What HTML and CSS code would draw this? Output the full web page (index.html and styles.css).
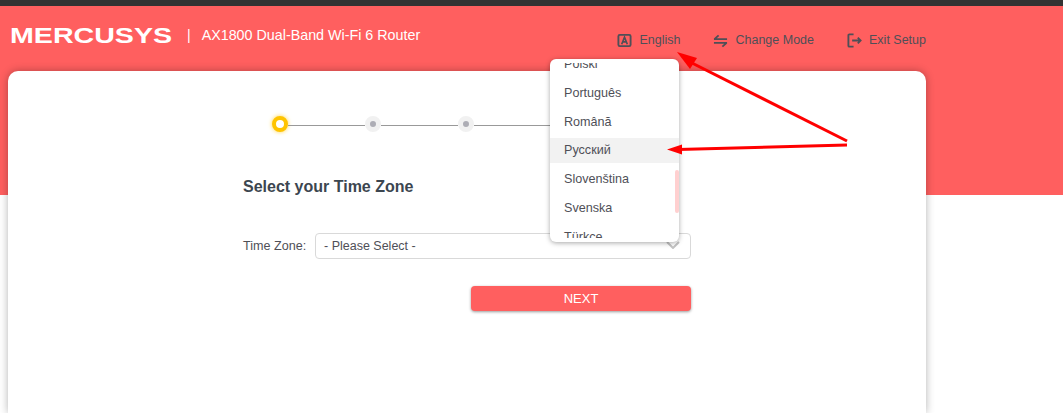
FILE: index.html
```html
<!DOCTYPE html>
<html lang="en">
<head>
    <meta charset="UTF-8">
    <meta name="viewport" content="width=device-width, initial-scale=1.0">
    <title>Quick Setup</title>
    <link rel="stylesheet" href="styles.css">
</head>
<body>

    <div class="topbar"></div>

    <header class="band">
        <div class="logo"><span class="logo-text">MERCUSYS</span></div>
        <span class="divider">|</span>
        <span class="model">AX1800 Dual-Band Wi-Fi 6 Router</span>
        <nav class="nav">
            <a class="nav-item">
                <svg class="nav-icon" viewBox="0 0 16 16" fill="none" stroke="#4f4f57" stroke-width="2">
                    <rect x="1.500" y="2" width="13" height="12" rx="1.500"/>
                    <path d="M5 12 8 4.500 11 12M6 9.500h4" stroke-width="1.800"/>
                </svg>
                English
            </a>
            <a class="nav-item">
                <svg class="nav-icon" viewBox="0 0 16 16" fill="none" stroke="#4f4f57" stroke-width="2">
                    <path d="M1 6.500H15M1.500 6.500 6 2.500M1 10.500H15M14.500 10.500 10 14.500"/>
                </svg>
                Change Mode
            </a>
            <a class="nav-item">
                <svg class="nav-icon" viewBox="0 0 16 16" fill="none" stroke="#4f4f57" stroke-width="2">
                    <path d="M7 1.500H2.500a1 1 0 0 0-1 1v11a1 1 0 0 0 1 1H7M5.500 8H14M11.500 5l3 3-3 3"/>
                </svg>
                Exit Setup
            </a>
        </nav>
    </header>

    <main class="card">
        <div class="stepper">
            <span class="step step-active"></span>
            <span class="step-line"></span>
            <span class="step"></span>
            <span class="step-line"></span>
            <span class="step"></span>
            <span class="step-line"></span>
            <span class="step"></span>
        </div>

        <div class="form">
            <h2>Select your Time Zone</h2>
            <div class="field">
                <label class="field-label">Time Zone:</label>
                <div class="select">
                    - Please Select -
                    <svg class="chevron" viewBox="0 0 14 8" fill="none" stroke="#c4c4c4" stroke-width="2">
                        <path d="M1 1l6 6 6-6"/>
                    </svg>
                </div>
            </div>
            <div class="actions">
                <button class="next-button">NEXT</button>
            </div>
        </div>
    </main>

    <div class="lang-menu">
        <div class="lang-list">
            <ul>
                <li>Polski</li>
                <li>Português</li>
                <li>Română</li>
                <li class="selected">Русский</li>
                <li>Slovenština</li>
                <li>Svenska</li>
                <li>Türkçe</li>
            </ul>
        </div>
        <div class="scroll-thumb"></div>
    </div>

    <!-- red arrows drawn on top of the screenshot -->
    <svg class="arrows" width="1063" height="413" viewBox="0 0 1063 413">
        <path d="M847 141 686 60" fill="none" stroke="#f00" stroke-width="3"/>
        <path d="M677 52 697 58 690 69Z" fill="#f00"/>
        <path d="M847 145 678 149.500" fill="none" stroke="#f00" stroke-width="3"/>
        <path d="M667 149.500 682 144.500 682 154.500Z" fill="#f00"/>
    </svg>

</body>
</html>
```

FILE: styles.css
```css
body {
    margin: 0;
    padding: 0;
    position: relative;
    height: 413px;
    overflow: hidden;
    background-color: #fff;
    font-family: "Liberation Sans", Arial, sans-serif;
    color: #4f4f57;
}
.topbar {
    height: 6px;
    background-color: #333;
}
.band {
    height: 189px;
    box-sizing: border-box;
    padding: 21px 137px 0 10px;
    display: flex;
    align-items: flex-start;
    background-color: #ff5f5f;
    color: #fff;
}
.logo {
    width: 162px;
    height: 18px;
}
.logo-text {
    display: inline-block;
    font-weight: 700;
    font-size: 22px;
    line-height: 18px;
    transform: scaleX(1.3);
    transform-origin: left center;
}
.divider {
    margin-left: 15px;
    font-size: 14px;
    line-height: 16px;
}
.model {
    margin-left: 11px;
    font-size: 14.300px;
    line-height: 16px;
}
.nav {
    margin-left: auto;
    display: flex;
    gap: 33px;
    padding-top: 5px;
}
.nav-item {
    display: flex;
    align-items: center;
    gap: 7px;
    font-size: 12.500px;
    line-height: 16px;
    color: #4f4f57;
}
.nav-icon {
    width: 15px;
    height: 15px;
}
.card {
    width: 918px;
    height: 342px;
    margin: -124px 0 0 8px;
    padding-top: 45px;
    box-sizing: border-box;
    background-color: #fff;
    border-radius: 10px 10px 0 0;
    box-shadow: 0 0 8px rgba(0, 0, 0, 0.3);
    position: relative;
}
.stepper {
    display: flex;
    align-items: center;
    margin-left: 264px;
    width: 300px;
}
.step {
    width: 16px;
    height: 16px;
    box-sizing: border-box;
    flex: none;
    border-radius: 50%;
    background-color: #adadb5;
    border: 5px solid #f1f1f1;
}
.step-active {
    background-color: #fff;
    border: 4px solid #ffc400;
    box-shadow: 0 0 4px #ffd54a;
}
.step-line {
    width: 77px;
    height: 1px;
    margin-top: 2px;
    flex: none;
    background-color: #999;
}
.form {
    width: 448px;
    margin: 45px 0 0 235px;
}
h2 {
    margin: 0;
    font-size: 16px;
    line-height: 20px;
    font-weight: 700;
    color: #3c4650;
}
.field {
    display: flex;
    align-items: center;
    margin-top: 36px;
    font-size: 12.600px;
}
.field-label {
    width: 72px;
    color: #4f4f57;
}
.select {
    flex: 1;
    height: 26px;
    box-sizing: border-box;
    padding-left: 8px;
    display: flex;
    align-items: center;
    justify-content: space-between;
    border: 1px solid #d9d9d9;
    border-radius: 4px;
    font-size: 12.500px;
    background-color: #fff;
}
.chevron {
    width: 14px;
    height: 8px;
    margin: 0 10px 2px 0;
}
.actions {
    display: flex;
    justify-content: flex-end;
    margin-top: 27px;
}
.next-button {
    width: 220px;
    height: 25px;
    padding: 0;
    border: none;
    border-radius: 4px;
    background-color: #ff5f5f;
    color: #fff;
    font-family: inherit;
    font-size: 13px;
    box-shadow: 0 1px 3px rgba(0, 0, 0, 0.4);
}
.lang-menu {
    position: absolute;
    left: 550px;
    top: 59px;
    width: 129px;
    height: 183px;
    box-sizing: border-box;
    padding: 4px 0;
    background-color: #fff;
    border-radius: 6px;
    box-shadow: 0 1px 5px rgba(0, 0, 0, 0.35);
}
.lang-list {
    height: 175px;
    overflow: hidden;
}
.lang-menu ul {
    list-style: none;
    margin: -11px 0 0 0;
    padding: 0;
}
.lang-menu li {
    height: 25px;
    margin-bottom: 3.750px;
    padding-left: 14px;
    line-height: 25px;
    font-size: 12.600px;
    color: #4f4f57;
}
.lang-menu li.selected {
    background-color: #f2f2f2;
}
.scroll-thumb {
    position: absolute;
    right: 0;
    top: 111px;
    width: 4px;
    height: 43px;
    border-radius: 2px;
    background-color: #ffd0d0;
}
.arrows {
    position: absolute;
    left: 0;
    top: 0;
    pointer-events: none;
}
```
